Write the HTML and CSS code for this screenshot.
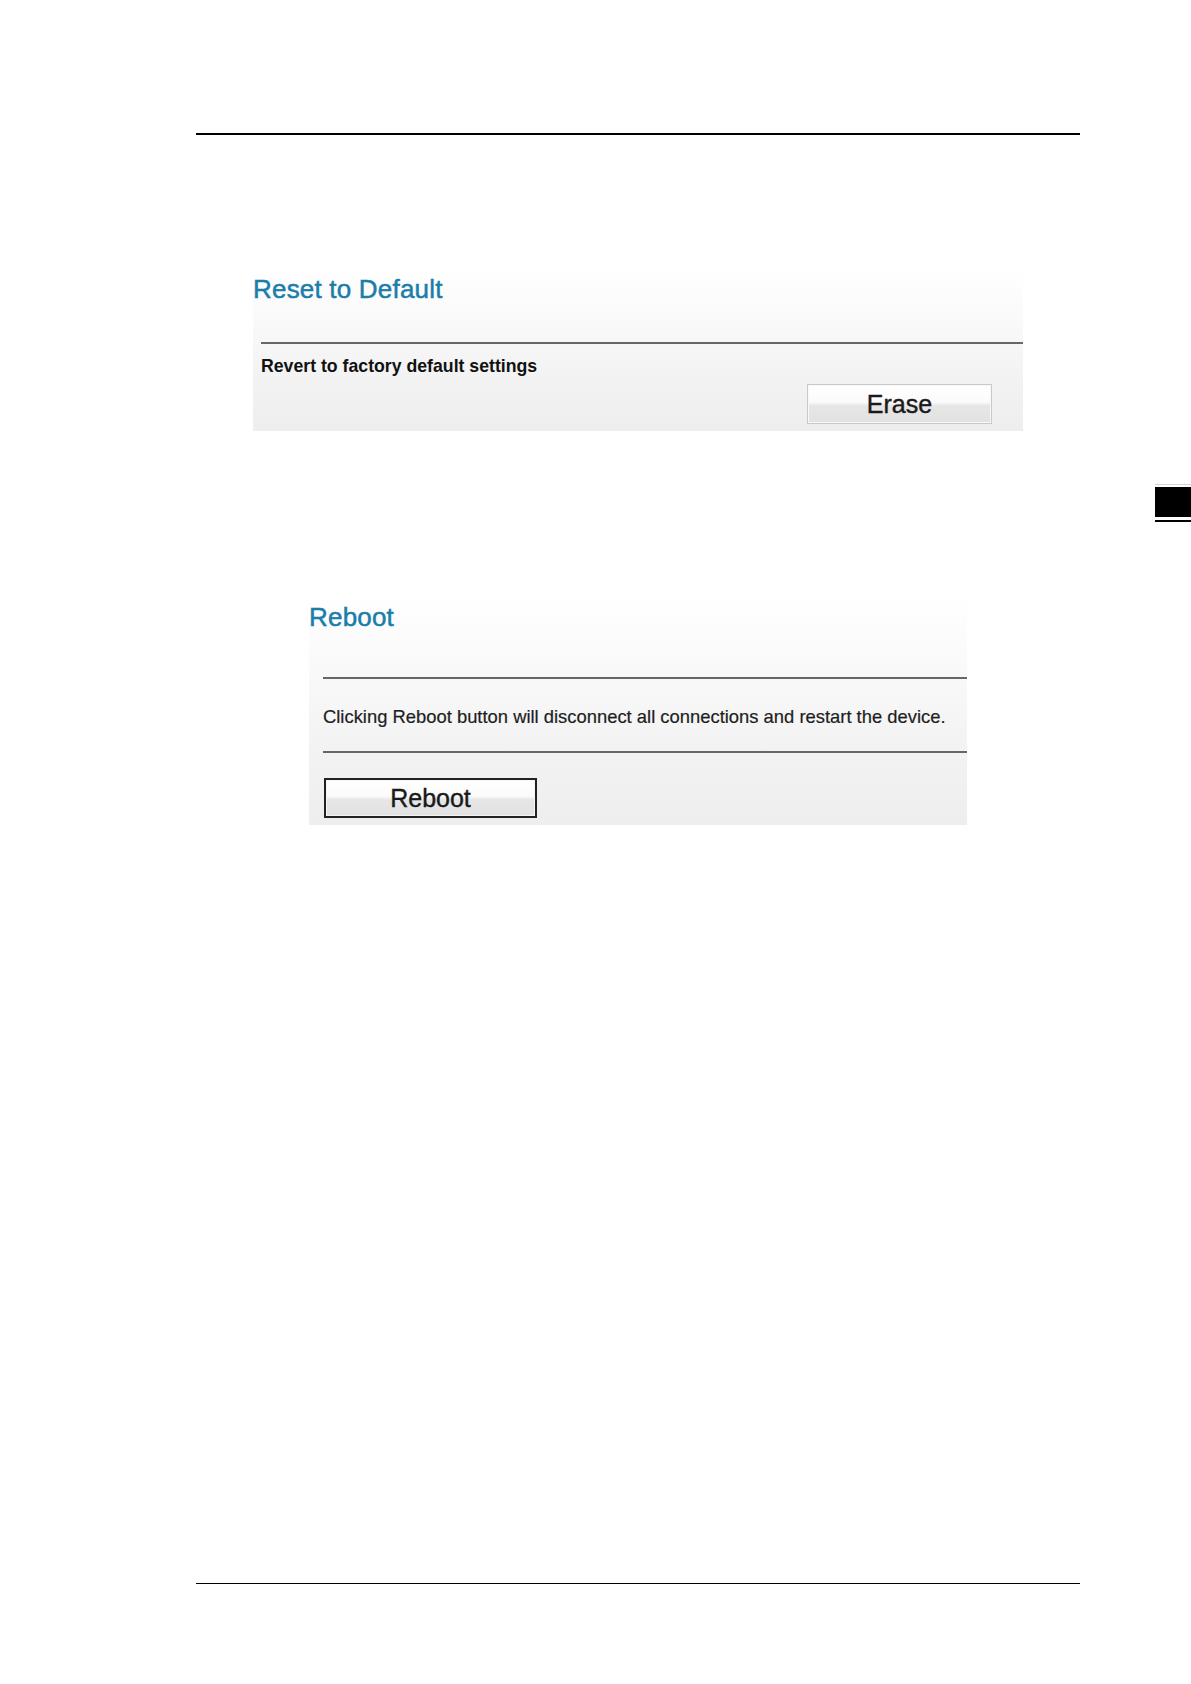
FILE: index.html
```html
<!DOCTYPE html>
<html lang="en">
<head>
<meta charset="utf-8">
<title>Reset to Default / Reboot</title>
<link rel="stylesheet" href="styles.css">
</head>
<body>
<div class="page">
  <div class="rule-top"></div>

  <section class="panel panel-reset">
    <h2 class="panel-title">Reset to Default</h2>
    <div class="divider divider-reset"></div>
    <p class="reset-label">Revert to factory default settings</p>
    <div class="reset-actions">
      <button class="btn btn-erase" type="button">Erase</button>
    </div>
  </section>

  <section class="panel panel-reboot">
    <h2 class="panel-title">Reboot</h2>
    <div class="divider divider-reboot-1"></div>
    <p class="reboot-text">Clicking Reboot button will disconnect all connections and restart the device.</p>
    <div class="divider divider-reboot-2"></div>
    <button class="btn btn-reboot" type="button">Reboot</button>
  </section>

  <div class="rule-bottom"></div>

  <div class="thumb-tab">
    <div class="thumb-top"></div>
    <div class="thumb-block"></div>
    <div class="thumb-bottom"></div>
  </div>
</div>
</body>
</html>
```

FILE: styles.css
```css
html, body {
  margin: 0;
  padding: 0;
  background: #ffffff;
}

body {
  font-family: "Liberation Sans", Arial, sans-serif;
  color: #111;
}

.page {
  position: relative;
  width: 1191px;
  min-height: 1684px;
  padding-top: 133px;
  box-sizing: border-box;
  display: flex;
  flex-direction: column;
}

.rule-top {
  margin-left: 196px;
  width: 884px;
  height: 2px;
  background: #000;
}

.rule-bottom {
  margin-left: 196px;
  width: 884px;
  height: 1px;
  background: #000;
  margin-top: 758px;
}

.panel {
  box-sizing: border-box;
  display: flex;
  flex-direction: column;
  background: linear-gradient(to bottom, #ffffff 0%, #f9f9f9 35%, #f3f3f3 65%, #eeeeee 100%);
}

.panel-title {
  margin: 0;
  font-family: "Liberation Sans", Arial, sans-serif;
  font-weight: normal;
  font-size: 26px;
  line-height: 30px;
  letter-spacing: 0.2px;
  color: #1b7daa;
  -webkit-text-stroke: 0.5px #1b7daa;
}

.divider {
  height: 2px;
  background: #676767;
}

/* Reset to Default */
.panel-reset {
  margin-top: 133px;
  margin-left: 253px;
  width: 770px;
  height: 163px;
  padding-top: 6px;
}

.divider-reset {
  margin-top: 38px;
  margin-left: 8px;
}

.reset-label {
  margin: 11px 0 0 8px;
  font-size: 17.7px;
  line-height: 22px;
  font-weight: bold;
  color: #111;
}

.reset-actions {
  display: flex;
  justify-content: flex-end;
  margin-top: 7px;
  padding-right: 31px;
}

.btn {
  box-sizing: border-box;
  height: 40px;
  font-family: "Liberation Sans", Arial, sans-serif;
  font-size: 25px;
  line-height: 36px;
  color: #1a1a1a;
  -webkit-text-stroke: 0.4px #1a1a1a;
  padding: 0;
  cursor: pointer;
  background: linear-gradient(to bottom, #ffffff 0%, #fbfbfb 45%, #e6e6e6 55%, #e2e2e2 100%);
}

.btn-erase {
  width: 185px;
  border: 1px solid #c9c9c9;
  box-shadow: inset 0 0 0 1px #f8f8f8;
}

/* Reboot */
.panel-reboot {
  margin-top: 163px;
  margin-left: 309px;
  width: 658px;
  height: 231px;
  padding-top: 8px;
}

.divider-reboot-1 {
  margin-top: 45px;
  margin-left: 14px;
}

.reboot-text {
  margin: 27px 0 0 14px;
  font-size: 18.4px;
  line-height: 22px;
  color: #1e1e1e;
  -webkit-text-stroke: 0.2px #1e1e1e;
  white-space: nowrap;
}

.divider-reboot-2 {
  margin-top: 23px;
  margin-left: 14px;
}

.btn-reboot {
  align-self: flex-start;
  margin-top: 25px;
  margin-left: 15px;
  width: 213px;
  border: 2px solid #222;
  box-shadow: inset 0 0 0 1px #f4f4f4;
  line-height: 34px;
}

/* page-edge thumb index tab */
.thumb-tab {
  position: absolute;
  right: 0;
  top: 484px;
  width: 36px;
  display: flex;
  flex-direction: column;
}

.thumb-top {
  height: 1px;
  background: #d6d6d6;
  margin-bottom: 2px;
}

.thumb-block {
  height: 30px;
  background: #000;
}

.thumb-bottom {
  height: 2px;
  background: #000;
  margin-top: 3px;
}
```
